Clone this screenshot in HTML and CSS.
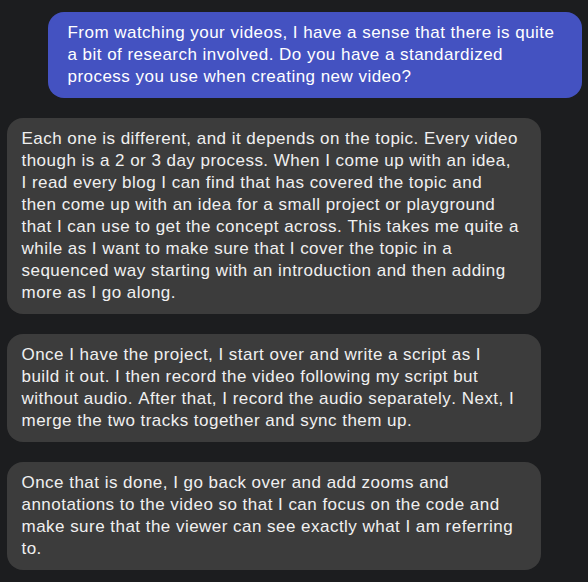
FILE: index.html
```html
<!DOCTYPE html>
<html>
<head>
<meta charset="utf-8">
<link rel="stylesheet" href="styles.css">
</head>
<body>
<div class="chat">
  <div class="msg msg-out">From watching your videos, I have a sense that there is quite a bit of research involved. Do you have a standardized process you use when creating new video?</div>
  <div class="msg msg-in">Each one is different, and it depends on the topic. Every video though is a 2 or 3 day process. When I come up with an idea, I read every blog I can find that has covered the topic and then come up with an idea for a small project or playground that I can use to get the concept across. This takes me quite a while as I want to make sure that I cover the topic in a sequenced way starting with an introduction and then adding more as I go along.</div>
  <div class="msg msg-in">Once I have the project, I start over and write a script as I build it out. I then record the video following my script but without audio. After that, I record the audio separately. Next, I merge the two tracks together and sync them up.</div>
  <div class="msg msg-in">Once that is done, I go back over and add zooms and annotations to the video so that I can focus on the code and make sure that the viewer can see exactly what I am referring to.</div>
</div>
</body>
</html>
```
FILE: styles.css
```css
html, body {
  margin: 0;
  padding: 0;
  background: #1c1d1f;
}
body {
  font-family: "Liberation Sans", Arial, sans-serif;
  font-size: 17px;
  line-height: 22px;
  letter-spacing: 0.47px;
  font-kerning: none;
  color: #f0f0f0;
}
.chat {
  display: flex;
  flex-direction: column;
  gap: 20px;
  padding: 12px 6px 12px 7px;
}
.msg {
  box-sizing: border-box;
  width: 534px;
  padding: 10px 22px 10px 14.5px;
  border-radius: 16px;
}
.msg-out {
  align-self: flex-end;
  background: #4452c1;
  padding-left: 19.5px;
  padding-right: 20px;
  color: #ffffff;
}
.msg-in {
  align-self: flex-start;
  background: #3c3c3c;
}
```
